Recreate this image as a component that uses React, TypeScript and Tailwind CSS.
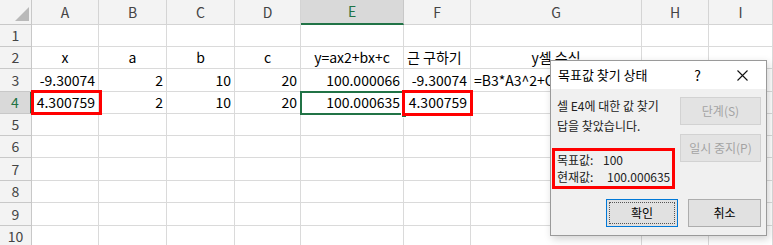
import React from "react";

const cols = ["A", "B", "C", "D", "E", "F", "G", "H", "I"];
type Cell = { t?: string; a?: "l" | "r" | "c"; clip?: boolean };
const data: Record<number, Cell[]> = {
  2: [
    { t: "x", a: "c" },
    { t: "a", a: "c" },
    { t: "b", a: "c" },
    { t: "c", a: "c" },
    { t: "y=ax2+bx+c", a: "c" },
    { t: "근 구하기", a: "l" },
    { t: "y셀 수식", a: "c" },
  ],
  3: [
    { t: "-9.30074", a: "r" },
    { t: "2", a: "r" },
    { t: "10", a: "r" },
    { t: "20", a: "r" },
    { t: "100.000066", a: "r" },
    { t: "-9.30074", a: "r" },
    { t: "=B3*A3^2+C3*A3+D3", a: "l", clip: true },
  ],
  4: [
    { t: "4.300759", a: "r" },
    { t: "2", a: "r" },
    { t: "10", a: "r" },
    { t: "20", a: "r" },
    { t: "100.000635", a: "r" },
    { t: "4.300759", a: "r" },
  ],
};

const font = { fontFamily: '"Noto Sans CJK KR", "Noto Sans", sans-serif' };

export default function App() {
  const rows = [1, 2, 3, 4, 5, 6, 7, 8, 9, 10];
  return (
    <div className="relative w-[773px] h-[245px] overflow-hidden bg-white" style={font}>
      <div className="grid grid-cols-[32px_67px_68px_68px_66px_103px_67px_171px_67px_64px] grid-rows-[25px_22px_22px_23px_22px_22px_22px_23px_22px_23px_22px]">
        {/* corner */}
        <div className="relative bg-[#f3f3f3] border-r border-b border-[#c8c8c8]">
          <svg className="absolute left-[14px] top-[6px]" width="16" height="16" viewBox="0 0 16 16">
            <polygon points="15,1 15,15 1,15" fill="#b9b9b9" />
          </svg>
        </div>
        {cols.map((c) => (
          <div
            key={c}
            className={
              c === "E"
                ? "flex items-center justify-center bg-[#d9d9d9] border-r border-[#c8c8c8] border-b-2 border-b-[#217346] text-[14px] text-[#217346]"
                : "flex items-center justify-center bg-[#f3f3f3] border-r border-b border-[#d4d4d4] text-[14px] text-[#444]"
            }
          >
            {c}
          </div>
        ))}
        {rows.map((r) => (
          <React.Fragment key={r}>
            <div
              className={
                r === 4
                  ? "flex items-center justify-center bg-[#d9d9d9] border-r-2 border-r-[#217346] border-b border-[#c8c8c8] text-[14px] text-[#217346]"
                  : "flex items-center justify-center bg-[#f3f3f3] border-r border-b border-[#c8c8c8] text-[14px] text-[#444]"
              }
            >
              {r}
            </div>
            {cols.map((c, i) => {
              const cell = data[r]?.[i];
              const align =
                cell?.a === "r"
                  ? "justify-end pr-[3px]"
                  : cell?.a === "c"
                  ? "justify-center"
                  : "justify-start pl-[3px]";
              return (
                <div
                  key={c}
                  className={`flex items-center ${align} border-r border-b border-[#dadada] text-[14px] text-black whitespace-nowrap overflow-visible`}
                >
                  {cell?.t ? (
                    cell.clip ? (
                      <span className="block w-[76px] overflow-hidden">{cell.t}</span>
                    ) : (
                      <span>{cell.t}</span>
                    )
                  ) : null}
                </div>
              );
            })}
          </React.Fragment>
        ))}
      </div>

      {/* red highlight A4 */}
      <div className="absolute left-[31px] top-[90px] w-[71px] h-[25px] border-[3px] border-[#ff0000]" />
      {/* selection E4 */}
      <div className="absolute left-[300px] top-[91px] w-[105px] h-[24px] border-2 border-[#217346]" />
      <div className="absolute left-[401px] top-[112px] w-[6px] h-[6px] bg-[#217346] border border-white" />
      {/* red highlight F4 */}
      <div className="absolute left-[402px] top-[90px] w-[71px] h-[26px] border-[3px] border-[#ff0000]" />

      {/* dialog */}
      <div className="absolute left-[550px] top-[60px] w-[217px] h-[176px] bg-[#f0f0f0] border border-[#9a9a9a] shadow-[2px_3px_8px_rgba(0,0,0,0.18)] flex flex-col text-[12px] leading-[14px] text-[#222]">
        <div className="h-[28px] bg-white flex items-center pl-[7px] shrink-0">
          <span className="text-[13px] text-black">목표값 찾기 상태</span>
          <span className="ml-auto mr-[36px] text-[14px] text-black">?</span>
          <svg className="mr-[18px]" width="11" height="11" viewBox="0 0 11 11">
            <path d="M0.5 0.5 L10.5 10.5 M10.5 0.5 L0.5 10.5" stroke="#111" strokeWidth="1.1" />
          </svg>
        </div>
        <div className="flex flex-col">
          <div className="flex justify-between">
            <div className="flex flex-col w-[123px] ml-[1px]">
              <div className="mt-[7px] h-[20px] flex items-center pl-[5px] whitespace-nowrap">셀 E4에 대한 값 찾기</div>
              <div className="h-[20px] flex items-center pl-[5px] whitespace-nowrap">답을 찾았습니다.</div>
              <div className="mt-[12px] h-[41px] border-[3px] border-[#ff0000] flex flex-col justify-center pl-[2px]">
                <div className="h-[17px] flex items-center whitespace-nowrap">
                  <span className="w-[46px]">목표값:</span>
                  <span>100</span>
                </div>
                <div className="h-[17px] flex items-center whitespace-nowrap">
                  <span className="w-[50px]">현재값:</span>
                  <span>100.000635</span>
                </div>
              </div>
            </div>
            <div className="flex flex-col w-[81px] mr-[5px] mt-[8px] gap-[9px]">
              <div className="h-[28px] bg-[#e3e3e3] border border-[#d2d2d2] flex items-center justify-center text-[#a3a3a3]">단계(S)</div>
              <div className="h-[28px] bg-[#e3e3e3] border border-[#d2d2d2] flex items-center justify-center text-[#a3a3a3]">일시 중지(P)</div>
            </div>
          </div>
          <div className="flex justify-end gap-[10px] mr-[5px] mt-[10px]">
            <div className="w-[72px] h-[28px] bg-[#e1e1e1] border border-[#0078d7] p-[2px]">
              <div className="w-full h-full border border-dotted border-[#555] flex items-center justify-center text-black">확인</div>
            </div>
            <div className="w-[73px] h-[28px] bg-[#e1e1e1] border border-[#adadad] flex items-center justify-center text-black">취소</div>
          </div>
        </div>
      </div>
    </div>
  );
}
